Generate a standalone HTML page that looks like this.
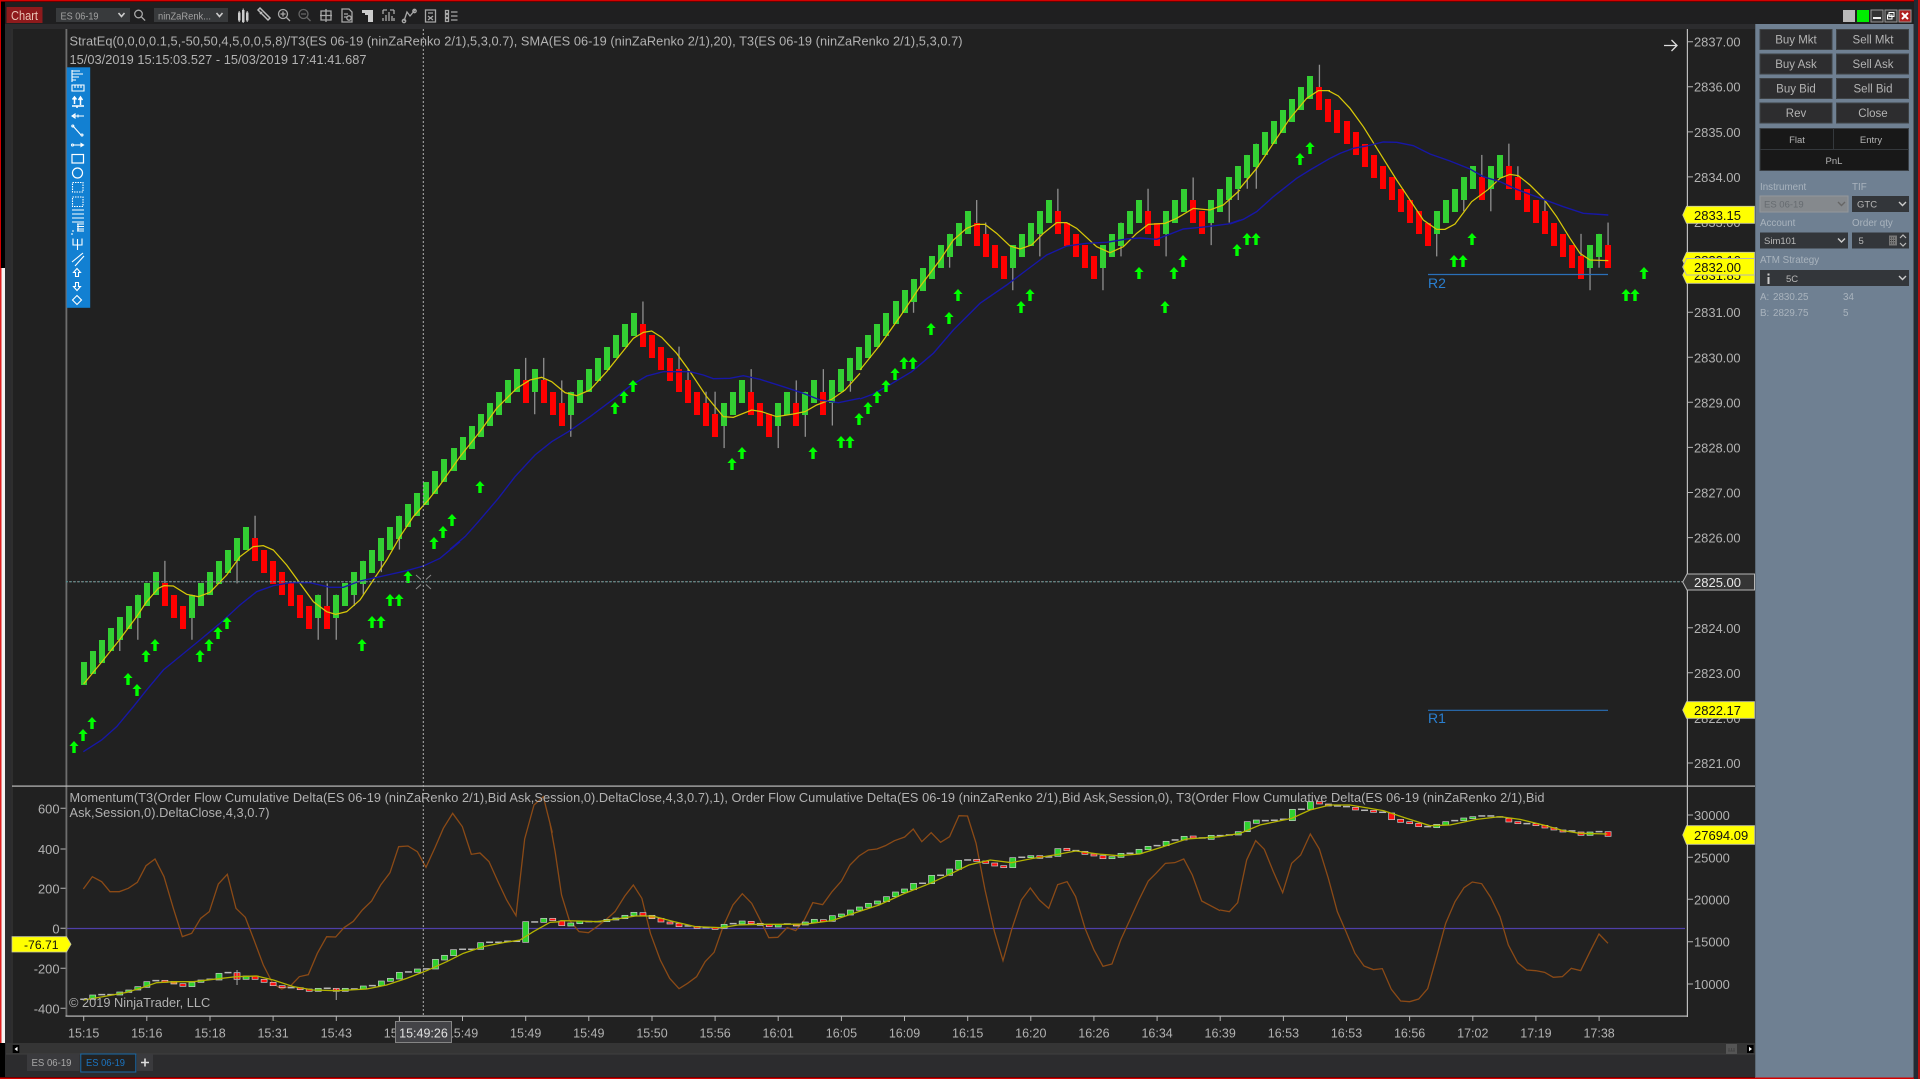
<!DOCTYPE html>
<html><head><meta charset="utf-8"><title>Chart</title>
<style>
html,body{margin:0;padding:0;background:#000;overflow:hidden}
svg{display:block;font-family:"Liberation Sans",Arial,sans-serif}
text{fill:#b2b2b2;font-size:12.8px}
.y{fill:none;stroke:#d8c808;stroke-width:1.25}
.b{fill:none;stroke:#1717a6;stroke-width:1.4}
.br{fill:none;stroke:#8b4a16;stroke-width:1.3}
.ol{fill:none;stroke:#b4b400;stroke-width:1.3}
.ic{fill:none;stroke:#a8a8a8;stroke-width:1.3}
.w{fill:none;stroke:#fff;stroke-width:1.1}
.btn{fill:#2d2d2f;stroke:#3e4245;stroke-width:1}
.bt{fill:#b4b4b4;font-size:11.5px;text-anchor:middle}
.lb{fill:#a9b3bd;font-size:9.8px}
.sel{fill:#33363a}
.yl{fill:#ffff00;stroke:#c8c8a0;stroke-width:.8}
.yt{fill:#111;font-size:13px}
.a1{fill:#b2b2b2;font-size:12.9px}
.t{fill:#b2b2b2;font-size:12.5px;text-anchor:middle}
</style></head><body>
<svg id="s" xmlns="http://www.w3.org/2000/svg" width="1920" height="1079" viewBox="0 0 1920 1079">
<defs><path id="a" d="M0 0L4.6 5H1.7V12H-1.7V5H-4.6Z" fill="#00ff00"/></defs>
<!-- outer -->
<rect width="1920" height="1079" fill="#000"/>
<rect x="0" y="0" width="1920" height="1.5" fill="#d40000"/>
<rect x="0" y="0" width="1" height="268" fill="#d40000"/>
<rect x="0" y="268" width="5" height="775" fill="#f4f4f4"/>
<rect x="0" y="268" width="1.5" height="775" fill="#e02020"/>
<rect x="5" y="2" width="1910" height="1075" fill="#2c2c2e"/>
<rect x="5" y="2" width="1910" height="22" fill="#1f1f20"/>
<rect x="0" y="1077.5" width="1920" height="1.5" fill="#d40000"/>
<rect x="1914" y="0" width="4" height="1079" fill="#222a33"/>
<rect x="1918" y="0" width="2" height="1079" fill="#b01010"/>
<!-- top bar -->
<rect x="6.5" y="7" width="36" height="16" fill="#8e1a1c"/>
<text x="11" y="20" textLength="27" lengthAdjust="spacingAndGlyphs" style="font-size:13px;fill:#eac4b6">Chart</text>
<rect x="56" y="8" width="74" height="14" fill="#383a3c"/>
<text x="60.5" y="19.5" textLength="38" lengthAdjust="spacingAndGlyphs" style="font-size:10.5px;fill:#a2a2a2">ES 06-19</text>
<path d="M118.5 13l3 3.5 3-3.5" fill="none" stroke="#ccc" stroke-width="1.6"/>
<circle cx="138.5" cy="14" r="3.8" class="ic"/><path d="M141.5 17l3.6 3.6" class="ic"/>
<rect x="154" y="8" width="74" height="14" fill="#383a3c"/>
<text x="158" y="19.5" textLength="53" lengthAdjust="spacingAndGlyphs" style="font-size:10.5px;fill:#a2a2a2">ninZaRenk...</text>
<path d="M216.5 13l3 3.5 3-3.5" fill="none" stroke="#ccc" stroke-width="1.6"/>
<!-- toolbar icons -->
<path d="M238 12.500h2.500v8h-2.500zM242 10h2.500v12h-2.500zM246 12.500h2.500v8h-2.500z" fill="#ccc"/>
<path d="M239.200 11v11M243.200 8.500v14.500M247.200 11v11" stroke="#ccc"/>
<path d="M258 10l10 10 2-2-10-10zM260 14l2-2" class="ic" style="stroke:#bbb;stroke-width:1.5"/>
<circle cx="283" cy="14" r="4.500" class="ic"/><path d="M286.500 17.500l3.500 3.500M280.500 14h5M283 11.500v5" class="ic"/>
<circle cx="303.500" cy="14" r="4.500" class="ic" style="stroke:#666"/><path d="M307 17.500l3.500 3.500M301 14h5" class="ic" style="stroke:#666"/>
<path d="M321 11h10v9h-10zM326 9v13M320 15.500h12" class="ic"/>
<path d="M342 9h7l3 3v10h-10zM344 14h4M344 17h3" class="ic"/><circle cx="349" cy="18" r="2.200" class="ic"/>
<path d="M362 10h11v12h-5v-7h-3v-2h-3z" fill="#ccc"/>
<path d="M383 10h4M383 10v4M394 10v4M390 10h4M383 21v-3M394 21v-3M386 21v-6M389 21v-9M392 21v-5" class="ic"/>
<path d="M404 21l3-9 3 4 5-6" class="ic"/><circle cx="404" cy="21" r="1.700" class="ic"/><circle cx="414.500" cy="11" r="1.700" class="ic"/>
<path d="M425.500 10h10v12h-10zM428 13h5M428 16l5 4M433 16l-5 4" class="ic"/>
<path d="M445.500 10.500h3v3h-3zM445.500 14.500h3v3h-3zM445.500 18.500h3v3h-3zM451 12h6.500M451 16h6.500M451 20h6.500" class="ic"/>
<!-- window buttons -->
<rect x="1843" y="10" width="12" height="12" fill="#b9b9b9"/>
<rect x="1857" y="10" width="12" height="12" fill="#00ee00"/>
<rect x="1871" y="10" width="12" height="12" fill="#333" stroke="#999"/><rect x="1873" y="17" width="8" height="2" fill="#eee"/>
<rect x="1885" y="10" width="12" height="12" fill="#333" stroke="#999"/><path d="M1889 12.500h5v4h-5zM1887.500 15h4.500v4h-4.500z" fill="#333" stroke="#fff"/>
<rect x="1899" y="10" width="12" height="12" fill="#b02020" stroke="#999"/><path d="M1902 13l6 6M1908 13l-6 6" stroke="#fff" stroke-width="2"/>
<!-- chart background -->
<rect x="11" y="29" width="1744" height="1014" fill="#212121"/>
<rect x="11.500" y="29" width="1" height="1014" fill="#3a3a3a"/>
<!-- candles etc by script -->
<g id="cs"></g>
<!-- R lines -->
<path d="M1428 274.500H1608M1428 710.300H1608" stroke="#2a70b8" stroke-width="1.200"/>
<text x="1428" y="288" style="font-size:14px;fill:#2a7fd0">R2</text>
<text x="1428" y="723" style="font-size:14px;fill:#2a7fd0">R1</text>
<!-- T3 main -->
<polyline class="y" vector-effect="non-scaling-stroke" transform="translate(60,500) scale(.33333)" points="71,552 130,480 178,420 230,350 260,305 295,265 312,257 340,258 380,283 415,290 450,277 500,225 540,170 580,140 610,137 640,150 680,195 720,250 760,305 800,335 827,343 860,335 900,300 940,240 980,180 1020,110 1060,50 1105,0 1140,-45"/>
<polyline class="y" vector-effect="non-scaling-stroke" transform="translate(440,280) scale(.33333)" points="0,615 60,530 120,455 170,385 230,325 270,300 305,292 335,305 375,338 410,347 450,330 500,275 540,225 580,175 610,157 635,153 665,172 710,220 750,275 800,350 850,410 880,412 935,390 965,395 1010,410 1060,402 1095,395 1130,375 1175,358 1215,330 1260,280"/>
<polyline class="y" vector-effect="non-scaling-stroke" transform="translate(840,170) scale(.33333)" points="60,600 120,525 180,440 240,350 300,270 340,210 380,175 410,163 435,163 470,190 510,228 540,237 575,225 610,190 650,158 680,158 710,175 770,230 810,248 850,230 890,190 925,163 975,160 1010,145 1060,115 1110,120 1150,105 1200,60"/>
<polyline class="y" vector-effect="non-scaling-stroke" transform="translate(1130,50) scale(.33333)" points="330,415 380,355 430,280 480,205 530,145 565,122 600,122"/>
<polyline class="y" vector-effect="non-scaling-stroke" transform="translate(1250,50) scale(.33333)" points="235,122 265,138 300,175 340,230 390,310 440,390 480,450 520,510 560,538 585,538 615,522 665,455 715,418 750,385 780,373 805,377 840,405 880,445 920,500 960,565 990,610 1020,630 1075,632"/>
<!-- SMA -->
<polyline class="b" vector-effect="non-scaling-stroke" transform="translate(60,500) scale(.33333)" points="70,755 125,720 170,680 220,620 260,570 310,510 365,465 420,420 480,370 540,315 590,275 640,257 690,248 750,248 810,262 850,262 900,243 960,230 1040,212 1090,198 1140,175 1200,125"/>
<polyline class="b" vector-effect="non-scaling-stroke" transform="translate(440,280) scale(.33333)" points="30,808 75,770 115,725 175,655 225,590 285,525 335,485 385,455 450,410 510,365 575,315 620,288 670,275 750,275 790,285 820,296 870,295 910,287 960,298 1030,320 1090,340 1140,360 1195,368 1260,355"/>
<polyline class="b" vector-effect="non-scaling-stroke" transform="translate(840,170) scale(.33333)" points="60,687 100,672 140,650 215,605 280,550 340,480 420,400 500,345 560,300 620,255 680,228 740,220 800,217 860,207 900,204 950,208 1030,177 1100,170 1165,162 1200,150"/>
<polyline class="b" vector-effect="non-scaling-stroke" transform="translate(1130,50) scale(.33333)" points="300,522 340,508 380,485 430,440 500,385 540,360 600,325"/>
<polyline class="b" vector-effect="non-scaling-stroke" transform="translate(1250,50) scale(.33333)" points="240,325 270,310 310,295 350,288 400,276 440,277 490,287 540,312 600,333 660,357 700,380 750,395 800,418 880,448 940,470 1000,490 1075,495"/>
<g id="ar"></g>
<!-- lower panel: zero line, brown line, olive -->
<path d="M66 928.500H1685" stroke="#4f3fa8" stroke-width="1.200"/>
<polyline class="br" vector-effect="non-scaling-stroke" transform="translate(60,780) scale(.33333)" points="70,327 97,290 125,305 150,335 178,335 205,325 232,307 258,257 285,237 312,290 340,385 367,470 395,460 422,415 448,395 475,312 502,283 528,385 556,412 582,480 610,555 638,610 665,627 692,617 718,590 745,584 772,520 800,470 827,471 852,443 880,424 907,390 935,363 962,315 990,278 1016,200 1044,198 1072,215 1098,262 1125,203 1150,145 1178,100 1207,140 1234,223 1260,219 1287,245 1314,305 1340,360 1368,407 1394,177 1422,75 1450,50 1477,158"/>
<polyline class="br" vector-effect="non-scaling-stroke" transform="translate(550,790) scale(.42735,.33333)" points="0,100 12,185 27,315 45,390 68,425 90,428 110,410 130,390 152,365 175,318 195,285 215,325 235,430 258,510 280,565 302,596 322,580 343,560 363,515 384,487 405,410 428,345 450,311 472,340 490,385 512,443 533,442 555,413 575,422 595,390 615,338 638,344 660,305 682,273 702,225 723,198 745,180 765,177 785,167 806,152 830,141 850,117 870,155 892,128 914,157 935,140 957,77 977,78 997,160 1018,300 1040,425 1060,512 1080,420 1103,330 1124,294 1145,330 1167,355 1188,284 1210,275 1230,320 1252,415 1273,480 1294,529 1315,522 1336,448 1355,395 1378,330 1400,273 1418,250 1440,220 1462,218 1483,207 1503,255 1525,333 1568,362"/>
<polyline class="br" vector-effect="non-scaling-stroke" transform="translate(1200,780) scale(.33333)" points="60,390 88,395 113,368 140,240 167,182 193,208 220,275 248,338 275,250 302,225 331,162 358,207 385,295 412,395 438,455 465,520 492,558 520,569 547,566 574,628 602,663 629,665 656,657 683,626 710,530 737,430 765,365 792,323 817,306 845,311 872,352 900,410 925,495 953,548 980,570 1007,572 1034,577 1060,592 1087,590 1114,565 1142,572 1170,515 1197,462 1224,490"/>
<g id="lc"></g>
<polyline class="ol" vector-effect="non-scaling-stroke" transform="translate(60,780) scale(.33333)" points="70,660 130,650 200,637 240,625 290,608 340,605 400,605 460,598 530,590 590,588 640,600 700,620 760,630 830,632 920,627 980,615 1040,595 1100,572 1160,545 1210,520 1270,500 1330,488 1380,480 1420,455 1470,427 1500,425"/>
<polyline class="ol" vector-effect="non-scaling-stroke" transform="translate(550,790) scale(.42735,.33333)" points="24,392 70,393 110,395 150,388 200,378 240,378 290,395 340,410 400,413 440,405 490,403 550,403 600,402 660,392 710,370 770,345 830,310 890,280 940,250 980,225 1030,210 1080,218 1130,205 1180,195 1230,183 1290,193 1330,197 1380,192 1430,172 1490,147 1568,140"/>
<polyline class="ol" vector-effect="non-scaling-stroke" transform="translate(1200,780) scale(.33333)" points="60,170 120,160 180,135 275,115 330,90 390,75 450,75 550,92 620,115 690,137 750,135 830,118 900,110 960,118 1030,135 1090,152 1140,160 1222,162"/>
<!-- frame lines -->
<rect x="65.500" y="29" width="1.800" height="987.500" fill="#6e6e6e"/>
<rect x="65.500" y="1015.500" width="1622" height="1.200" fill="#bdbdbd"/>
<rect x="1686.800" y="29" width="1.200" height="988" fill="#bdbdbd"/>
<rect x="12" y="785.500" width="1743" height="1.200" fill="#bdbdbd"/>
<!-- crosshair -->
<path d="M423.300 29V1016" stroke="#b0b0b0" stroke-width="1" stroke-dasharray="2 2"/>
<path d="M66 581.700H1687" stroke="#4f9494" stroke-width="1" stroke-dasharray="2 2"/>
<path d="M67 581.700H1687" stroke="#8a8a8a" stroke-width="1" stroke-dasharray="2 2" stroke-dashoffset="2"/>
<path d="M416 575l5 4.500M431 575l-5 4.500M416 589l5-4.500M431 589l-5-4.500" stroke="#888" stroke-width="1"/>
<!-- titles -->
<text x="69.500" y="45.500" textLength="893" lengthAdjust="spacing">StratEq(0,0,0,0.1,5,-50,50,4,5,0,0,5,8)/T3(ES 06-19 (ninZaRenko 2/1),5,3,0.7), SMA(ES 06-19 (ninZaRenko 2/1),20), T3(ES 06-19 (ninZaRenko 2/1),5,3,0.7)</text>
<text x="69.500" y="64" textLength="297" lengthAdjust="spacing">15/03/2019 15:15:03.527 - 15/03/2019 17:41:41.687</text>
<text x="69.500" y="802" textLength="1475" lengthAdjust="spacing">Momentum(T3(Order Flow Cumulative Delta(ES 06-19 (ninZaRenko 2/1),Bid Ask,Session,0).DeltaClose,4,3,0.7),1), Order Flow Cumulative Delta(ES 06-19 (ninZaRenko 2/1),Bid Ask,Session,0), T3(Order Flow Cumulative Delta(ES 06-19 (ninZaRenko 2/1),Bid</text>
<text x="69.500" y="817" textLength="200" lengthAdjust="spacing">Ask,Session,0).DeltaClose,4,3,0.7)</text>
<text x="69" y="1007">© 2019 NinjaTrader, LLC</text>
<path d="M1664 45.500H1676M1671.500 40l5.500 5.500-5.500 5.500" fill="none" stroke="#ddd" stroke-width="1.300"/>
<!-- blue drawing toolbar -->
<rect x="66.700" y="67.300" width="23.500" height="240.500" fill="#1280d2"/>
<g class="w">
<path d="M72 71h8M72 74h11M72 77h7M72 80h4M72 70v12"/>
<path d="M72 85h12v6h-12zM75 85v3M78 85v3M81 85v3"/>
<path d="M74.500 97v7M72.500 99.500l2-2.500 2 2.500M80.500 105v-7M78.500 100l2-3 2 3M72 106h12M77 106v2" stroke-width="1.500"/>
<path d="M72 116h12M75 114l-3 2 3 2v-4zM78 114.500v3"/>
<path d="M73 126l8 9"/><circle cx="72.800" cy="126" r="1"/><circle cx="82" cy="135" r="1"/>
<path d="M73 145h10"/><circle cx="72.500" cy="145" r="1"/><path d="M81 143.500l2.500 1.500-2.500 1.500z"/>
<rect x="72" y="154.500" width="11.500" height="8.500" stroke-width="1.200"/>
<circle cx="77.500" cy="173" r="5" stroke-width="1.200"/>
<rect x="72.500" y="182.500" width="10.500" height="9.500" stroke-dasharray="1.500 1"/>
<rect x="72.500" y="197" width="10.500" height="9.500" stroke-dasharray="1.500 1"/>
<path d="M72 210h12M72 214h12M72 218h12M72 222h12"/>
<path d="M77 224h7M77 226.500h7M77 229h7M77 231h7M78 224v7M72 231h2M72 233v2"/>
<path d="M73 238.500v6.500h9v-6.500M77.500 239v11"/>
<path d="M72 262l11-9M75 266l9-10"/>
<path d="M77 268.500l3.500 4h-2v4h-3v-4h-2z"/>
<path d="M75.500 282.500h3v4h2l-3.500 4-3.500-4h2z"/>
<path d="M77 295.500l4.500 4.500-4.500 4.500-4.500-4.500z"/>
</g>
<g id="ax"></g>
<!-- axis right text -->
<text class="a1" x="1694" y="46.500">2837.00</text><text class="a1" x="1694" y="91.500">2836.00</text>
<text class="a1" x="1694" y="136.800">2835.00</text><text class="a1" x="1694" y="181.800">2834.00</text>
<text class="a1" x="1694" y="227">2833.00</text><text class="a1" x="1694" y="272">2832.00</text>
<text class="a1" x="1694" y="317.200">2831.00</text><text class="a1" x="1694" y="362.300">2830.00</text>
<text class="a1" x="1694" y="407.400">2829.00</text><text class="a1" x="1694" y="452.500">2828.00</text>
<text class="a1" x="1694" y="497.500">2827.00</text><text class="a1" x="1694" y="542.600">2826.00</text>
<text class="a1" x="1694" y="632.800">2824.00</text><text class="a1" x="1694" y="677.900">2823.00</text>
<text class="a1" x="1694" y="723">2822.00</text><text class="a1" x="1694" y="768">2821.00</text>
<text class="a1" x="1694" y="820">30000</text><text class="a1" x="1694" y="862.300">25000</text>
<text class="a1" x="1694" y="904.300">20000</text><text class="a1" x="1694" y="946.700">15000</text><text class="a1" x="1694" y="989">10000</text>
<!-- left axis -->
<g style="text-anchor:end"><text class="a1" x="59.500" y="813.300">600</text><text class="a1" x="59.500" y="854">400</text>
<text class="a1" x="59.500" y="893.300">200</text><text class="a1" x="59.500" y="933.300">0</text>
<text class="a1" x="59.500" y="973.300">-200</text><text class="a1" x="59.500" y="1013.300">-400</text></g>
<!-- time labels -->
<text class="t" x="83.700" y="1037.500">15:15</text><text class="t" x="146.800" y="1037.500">15:16</text><text class="t" x="210" y="1037.500">15:18</text>
<text class="t" x="273.100" y="1037.500">15:31</text><text class="t" x="336.300" y="1037.500">15:43</text><text class="t" x="399.400" y="1037.500">15:49</text>
<text class="t" x="462.500" y="1037.500">15:49</text><text class="t" x="525.700" y="1037.500">15:49</text><text class="t" x="588.800" y="1037.500">15:49</text>
<text class="t" x="652" y="1037.500">15:50</text><text class="t" x="715.100" y="1037.500">15:56</text><text class="t" x="778.200" y="1037.500">16:01</text>
<text class="t" x="841.400" y="1037.500">16:05</text><text class="t" x="904.500" y="1037.500">16:09</text><text class="t" x="967.700" y="1037.500">16:15</text>
<text class="t" x="1030.800" y="1037.500">16:20</text><text class="t" x="1093.900" y="1037.500">16:26</text><text class="t" x="1157.100" y="1037.500">16:34</text>
<text class="t" x="1220.200" y="1037.500">16:39</text><text class="t" x="1283.400" y="1037.500">16:53</text><text class="t" x="1346.500" y="1037.500">16:53</text>
<text class="t" x="1409.600" y="1037.500">16:56</text><text class="t" x="1472.800" y="1037.500">17:02</text><text class="t" x="1535.900" y="1037.500">17:19</text><text class="t" x="1599.100" y="1037.500">17:38</text>
<!-- crosshair time label -->
<rect x="395.500" y="1021.500" width="56" height="21" fill="#434347" stroke="#858585"/>
<text x="423.500" y="1037.500" style="font-size:12.5px;fill:#e2e2e2;text-anchor:middle">15:49:26</text>
<!-- yellow labels -->
<path class="yl" d="M1682.700 260.500L1686.500 252.300H1754.500V269H1686.500Z"/>
<text class="yt" x="1694" y="265">2832.10</text>
<path class="yl" d="M1682.700 275L1686.500 267H1754.500V283.300H1686.500Z"/>
<text class="yt" x="1694" y="280">2831.85</text>
<path class="yl" d="M1682.700 215L1686.500 206.300H1754.500V223.300H1686.500Z"/>
<text class="yt" x="1694" y="220">2833.15</text>
<path class="yl" style="stroke:#b5b5b5;stroke-width:1" d="M1682.700 267L1686.500 258.500H1754.500V275H1686.500Z"/>
<text class="yt" x="1694" y="272">2832.00</text>
<path class="yl" d="M1682.700 710L1686.500 701.700H1754.500V718.300H1686.500Z"/>
<text class="yt" x="1694" y="715">2822.17</text>
<path class="yl" d="M1682.700 835L1686.500 825.700H1754.500V844.300H1686.500Z"/>
<text class="yt" x="1694" y="840">27694.09</text>
<path class="yl" d="M12 936.700H66.500L71 944.300L66.500 952H12Z"/>
<text class="yt" x="24" y="949" style="font-size:12.2px">-76.71</text>
<path d="M1682.700 582L1687 574H1754.500V590H1687Z" fill="#353535" stroke="#b5b5b5"/>
<text x="1694" y="587" style="font-size:13px;fill:#e8e8e8">2825.00</text>
<!-- right panel -->
<rect x="1755" y="24" width="158.500" height="1053.500" fill="#6f8092"/>
<rect x="1755" y="24" width="1" height="1053" fill="#5a6875"/>
<rect class="btn" x="1760" y="29.500" width="72" height="20"/><text class="bt" x="1796" y="43.500">Buy Mkt</text>
<rect class="btn" x="1836.500" y="29.500" width="72" height="20"/><text class="bt" x="1873" y="43.500">Sell Mkt</text>
<rect class="btn" x="1760" y="54" width="72" height="20"/><text class="bt" x="1796" y="68">Buy Ask</text>
<rect class="btn" x="1836.500" y="54" width="72" height="20"/><text class="bt" x="1873" y="68">Sell Ask</text>
<rect class="btn" x="1760" y="78.500" width="72" height="20"/><text class="bt" x="1796" y="92.500">Buy Bid</text>
<rect class="btn" x="1836.500" y="78.500" width="72" height="20"/><text class="bt" x="1873" y="92.500">Sell Bid</text>
<rect class="btn" x="1760" y="103" width="72" height="20"/><text class="bt" x="1796" y="117">Rev</text>
<rect class="btn" x="1836.500" y="103" width="72" height="20"/><text class="bt" x="1873" y="117">Close</text>
<rect x="1760" y="128.500" width="148.500" height="42" fill="#181818" stroke="#3a3f44"/>
<path d="M1760 149.500H1908.500M1833.500 128.500V149.500" stroke="#34383c"/>
<text class="bt" x="1797" y="143" style="font-size:9.5px">Flat</text>
<text class="bt" x="1871" y="143" style="font-size:9.5px">Entry</text>
<text class="bt" x="1834" y="164" style="font-size:9.5px">PnL</text>
<text class="lb" x="1760" y="190">Instrument</text><text class="lb" x="1852" y="190">TIF</text>
<rect x="1760" y="196" width="88" height="16" fill="#85898d" stroke="#94989c"/>
<text x="1764" y="207.500" style="font-size:9.500px;fill:#666b70">ES 06-19</text>
<path d="M1838 202l3.500 3.500 3.500-3.500" fill="none" stroke="#666" stroke-width="1.400"/>
<rect class="sel" x="1852" y="196" width="57" height="16"/>
<text x="1857" y="207.500" style="font-size:9.500px;fill:#b8b8b8">GTC</text>
<path d="M1899 202l3.500 3.500 3.500-3.500" fill="none" stroke="#ccc" stroke-width="1.400"/>
<text class="lb" x="1760" y="226">Account</text><text class="lb" x="1852" y="226">Order qty</text>
<rect class="sel" x="1760" y="232.500" width="88" height="16"/>
<text x="1764" y="244" style="font-size:9.500px;fill:#b8b8b8">Sim101</text>
<path d="M1838 238.500l3.500 3.500 3.500-3.500" fill="none" stroke="#ccc" stroke-width="1.400"/>
<rect class="sel" x="1852" y="232.500" width="57" height="16"/>
<text x="1858.500" y="244" style="font-size:9.500px;fill:#b8b8b8">5</text>
<rect x="1889" y="235.500" width="8" height="10" fill="#777"/><path d="M1890 238h6M1890 240.500h6M1890 243h6" stroke="#333" stroke-dasharray="1 1"/>
<path d="M1900 238l3-3 3 3M1900 243l3 3 3-3" fill="none" stroke="#bbb" stroke-width="1.200"/>
<text class="lb" x="1760" y="263">ATM Strategy</text>
<rect class="sel" x="1760" y="270" width="149" height="16"/>
<rect x="1767.500" y="277" width="2" height="7" fill="#ccc"/><rect x="1767.500" y="273.500" width="2" height="2" fill="#ccc"/>
<text x="1786" y="282" style="font-size:9.500px;fill:#b8b8b8">5C</text>
<path d="M1899 276l3.500 3.500 3.500-3.500" fill="none" stroke="#ccc" stroke-width="1.400"/>
<text class="lb" x="1760" y="300">A:</text><text class="lb" x="1773" y="300">2830.25</text><text class="lb" x="1843" y="300">34</text>
<text class="lb" x="1760" y="316">B:</text><text class="lb" x="1773" y="316">2829.75</text><text class="lb" x="1843" y="316">5</text>
<!-- scrollbar and tabs -->
<rect x="6" y="1043" width="1749" height="11" fill="#353535"/>
<rect x="6" y="1053.500" width="1749" height="1" fill="#404040"/>
<rect x="12.700" y="1045" width="6.600" height="8" fill="#000"/><path d="M17.500 1046.800v4.400l-3-2.200z" fill="#fff"/>
<rect x="1747" y="1045" width="6.600" height="8" fill="#000"/><path d="M1749 1046.800v4.400l3-2.200z" fill="#fff"/>
<rect x="1726" y="1044" width="11" height="10" fill="#555"/><path d="M1728 1051h7M1729 1048v3M1731.500 1048v3M1734 1048v3" stroke="#444"/>
<rect x="27" y="1054" width="52.500" height="17" fill="#3a3a3d"/>
<text x="31.500" y="1066" textLength="40" lengthAdjust="spacingAndGlyphs" style="font-size:10.500px;fill:#a8a8a8">ES 06-19</text>
<rect x="80.800" y="1054" width="55" height="18" fill="#222" stroke="#1a6aa8"/>
<text x="86" y="1066" textLength="39" lengthAdjust="spacingAndGlyphs" style="font-size:10.500px;fill:#1b74c0">ES 06-19</text>
<rect x="137" y="1054" width="16" height="17" fill="#3a3a3d"/>
<path d="M141 1062.500h8M145 1058.500v8" stroke="#ddd" stroke-width="1.600"/>
</svg>
<script>
(function(){
var NS='http://www.w3.org/2000/svg';
function el(p,n,a){var e=document.createElementNS(NS,n);for(var k in a)e.setAttribute(k,a[k]);p.appendChild(e);return e;}
var X0=83.7,DX=9.02,T=11.275;
function X(i){return X0+DX*i;}
// main candles
var runs=[8,-3,7,-7,1,-1,21,-1,1,-3,8,-9,3,-3,2,-1,2,-1,16,-4,5,-5,5,-2,3,-2,12,-13,5,-1,2,-9,2,-1];
var up={9:2,19:2,27:2,49:2,51:2,53:2,62:2,66:2,67:1,69:1,70:2,74:2,79:2,82:2,99:2,100:1,108:2,118:2,123:2,137:2,155:2,158:2,159:1,162:1,166:2,169:2};
var dn={4:1,6:2,12:2,17:2,26:2,28:2,30:1,31:1,33:1,35:1,50:2,54:2,71:2,77:2,80:2,83:2,85:1,92:1,96:1,103:2,106:2,113:2,115:1,120:2,125:2,127:2,128:1,129:1,130:2,150:2,153:1,156:2,167:2,168:1};
var g=document.getElementById('cs');
var lev=0,i=0,bars=[{i:0,l:0,c:1}];
runs.forEach(function(r){var n=Math.abs(r),s=r>0?1:-1;for(var k=0;k<n;k++){lev+=s;i++;bars.push({i:i,l:lev,c:s>0?1:0});}});
var Y0=662.3;
bars.forEach(function(b){var x=X(b.i),t=Y0-b.l*T,h=2*T;
 if(up[b.i]||dn[b.i]){var a=t-(up[b.i]||0)*T,z=t+h+(dn[b.i]||0)*T;el(g,'line',{x1:x,x2:x,y1:a,y2:z,stroke:'#8f8f8f','stroke-width':1.3});}
});
bars.forEach(function(b){var x=X(b.i),t=Y0-b.l*T,h=2*T;
 el(g,'rect',{x:Math.round(x-3),y:Math.round(t),width:6,height:Math.round(h),fill:b.c?'#33cf33':'#ff0000'});
});
// arrows
var ar='74,741 83,729 92,717 128,673 137,684 146,650 155,639 200,650 209,639 218,627 227,617 362,639 372,616 381,616 390,594 399,594 408,571 434,537 443,526 452,514 480,481 615,402 624,391 633,380 732,458 742,447 813,447 841,436 850,436 859,413 868,402 877,391 886,380 895,368 904,357 913,357 931,323 949,312 958,289 1021,301 1030,289 1139,267 1165,301 1174,267 1183,255 1237,244 1247,233 1256,233 1300,153 1310,142 1454,255 1463,255 1472,233 1626,289 1635,289 1644,267'.split(' ');
var ga=document.getElementById('ar');
ar.forEach(function(p){var q=p.split(',');el(ga,'use',{href:'#a',x:q[0],y:q[1]});});
// lower candles
var lg=document.getElementById('lc');
var sets=[
[780,0,'d658 g645,658 d644 d644 g636,645 g630,637 g620,630 g605,622 d602 r601,606 o604,612 r611,619 g607,620 g600,607 d598 g580,600 d578 r578,598 g588,598 r588,598 r598,607 r607,617 r617,623 d623 r623,628 r627,634 g625,634 d625 r625,634 g625,634 d627 g618,627 d617 g603,617 g595,604 g577,597 d576 g567,577 d567 g538,567 g526,540 g509,527 d508 d508 g488,508 d487 d487 d484 d484 g425,487 d426 g415,427 r415,422'],
[790,53,'r393,407 g399,408 g393,401 d395 d395 g388,395 g384,389 g376,386 g367,377 r368,377 o376,386 r385,396 r396,401 r400,410 d408 r409,414 d413 r412,415 g403,415 d401 g393,402 r394,401 r400,406 r404,410 g403,411 d402 o402,407 g396,405 g388,398 r389,394 g377,394 g372,380 g360,375 g351,361 g340,352 g333,342 g320,335 g306,320 g297,308 g280,299 d280 g256,281 d256 g237,256 g211,238 d210 r208,213 r213,220 r219,228 r227,233 g203,233 d202 g197,203 r197,205 d201 g176,199 r175,182 d182 r184,193 r192,198 r197,206 g200,206 g190,202 d190 g178,191 g169,179 d167 g154,167 d150 g139,150 r138,144 d144 g136,148'],
[780,126,'d167 d165 g155,165 g125,155 g120,130 d122 d121 d118 g88,122 d88 g65,88 r65,72 o72,78 d78 d80 r82,90 d91 r91,97 d97 r99,119 r118,127 r125,131 r130,140 d140 g133,143 g125,135 d122 g114,122 g110,116 d108 d108 d111 r115,126 r125,131 d131 r131,137 r136,144 r143,150 r150,156 d153 r156,166 g156,166 d155 r155,169']
];
var col={g:'#2fd02f',r:'#ff1010',o:'#f08020'};
sets.forEach(function(s){var base=s[0],idx=s[1];s[2].split(' ').forEach(function(tok){
 var x=X(idx),c=tok[0],v=tok.slice(1).split(',').map(Number);
 if(c==='d'){el(lg,'rect',{x:x-3.5,y:base+v[0]/3-.8,width:7,height:1.5,fill:'#b8b8b8'});}
 else{el(lg,'rect',{x:x-3,y:base+v[0]/3,width:6,height:Math.max(2,(v[1]-v[0])/3),fill:col[c],stroke:'#c9c9c9','stroke-width':.7});}
 idx++;});});
// a few lower wicks
[[17,970,985],[28,988,1000]].forEach(function(w){el(lg,'line',{x1:X(w[0]),x2:X(w[0]),y1:w[1],y2:w[2],stroke:'#aaa','stroke-width':1});});
// axis ticks
var ax=document.getElementById('ax'),d='';
for(var p=0;p<=16;p++){var y=41.7+45.08*p;d+='M1688 '+y.toFixed(1)+'h5';}
[815,857.3,899.3,941.7,984].forEach(function(y){d+='M1688 '+y+'h5';});
[808.3,849,888.3,928.3,968.3,1008.3].forEach(function(y){d+='M60.5 '+y+'h5';});
for(var k=0;k<25;k++){d+='M'+X(k*7).toFixed(1)+' 1016v5';}
el(ax,'path',{d:d,stroke:'#b5b5b5','stroke-width':1,fill:'none'});
})();
</script>
</body></html>
